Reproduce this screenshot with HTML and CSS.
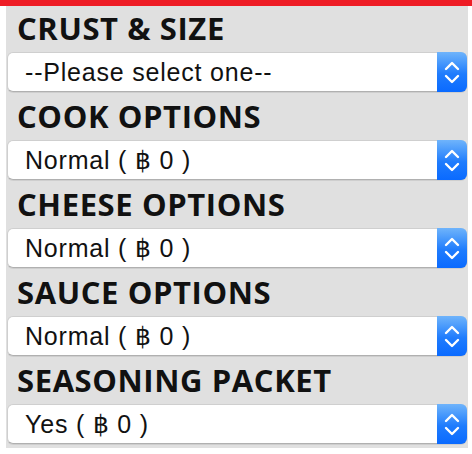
FILE: index.html
```html
<!DOCTYPE html>
<html>
<head>
<meta charset="utf-8">
<link rel="stylesheet" href="styles.css">
</head>
<body>
<div class="topbar"></div>
<div class="panel">
  <div class="group">
    <h2 class="label">CRUST &amp; SIZE</h2>
    <div class="field">
      <select class="picker"><option>--Please select one--</option></select>
      <span class="stepper"><svg viewBox="0 0 30 40" width="30" height="40"><path d="M9 17 L15 11 L21 17 M9 24 L15 30 L21 24" fill="none" stroke="#fff" stroke-width="2.4" stroke-linecap="round" stroke-linejoin="round"/></svg></span>
    </div>
  </div>
  <div class="group">
    <h2 class="label">COOK OPTIONS</h2>
    <div class="field">
      <select class="picker"><option>Normal ( ฿ 0 )</option></select>
      <span class="stepper"><svg viewBox="0 0 30 40" width="30" height="40"><path d="M9 17 L15 11 L21 17 M9 24 L15 30 L21 24" fill="none" stroke="#fff" stroke-width="2.4" stroke-linecap="round" stroke-linejoin="round"/></svg></span>
    </div>
  </div>
  <div class="group">
    <h2 class="label">CHEESE OPTIONS</h2>
    <div class="field">
      <select class="picker"><option>Normal ( ฿ 0 )</option></select>
      <span class="stepper"><svg viewBox="0 0 30 40" width="30" height="40"><path d="M9 17 L15 11 L21 17 M9 24 L15 30 L21 24" fill="none" stroke="#fff" stroke-width="2.4" stroke-linecap="round" stroke-linejoin="round"/></svg></span>
    </div>
  </div>
  <div class="group">
    <h2 class="label">SAUCE OPTIONS</h2>
    <div class="field">
      <select class="picker"><option>Normal ( ฿ 0 )</option></select>
      <span class="stepper"><svg viewBox="0 0 30 40" width="30" height="40"><path d="M9 17 L15 11 L21 17 M9 24 L15 30 L21 24" fill="none" stroke="#fff" stroke-width="2.4" stroke-linecap="round" stroke-linejoin="round"/></svg></span>
    </div>
  </div>
  <div class="group">
    <h2 class="label">SEASONING PACKET</h2>
    <div class="field">
      <select class="picker"><option>Yes ( ฿ 0 )</option></select>
      <span class="stepper"><svg viewBox="0 0 30 40" width="30" height="40"><path d="M9 17 L15 11 L21 17 M9 24 L15 30 L21 24" fill="none" stroke="#fff" stroke-width="2.4" stroke-linecap="round" stroke-linejoin="round"/></svg></span>
    </div>
  </div>
</div>
</body>
</html>
```
FILE: styles.css
```css
html, body {
  margin: 0;
  padding: 0;
  background: #fff;
}
.topbar {
  height: 6px;
  background: #ee1c25;
}
.panel {
  margin: 0 4px 0 6px;
  background: #e0e0e0;
  padding: 0 1px 4px 1px;
  display: flex;
  flex-direction: column;
  gap: 2px;
}
.group {
  display: flex;
  flex-direction: column;
}
.label {
  margin: 0;
  padding: 0 0 2px 10px;
  font-family: "Open Sans", sans-serif;
  font-weight: 700;
  font-size: 31px;
  line-height: 44px;
  color: #111;
  letter-spacing: 0.6px;
  white-space: nowrap;
}
.field {
  position: relative;
  height: 40px;
}
.picker {
  -webkit-appearance: none;
  appearance: none;
  width: 100%;
  height: 40px;
  margin: 0;
  box-sizing: border-box;
  border: 1px solid #cfcfcf;
  border-bottom-color: #b0b0b0;
  border-radius: 6px;
  background: #fff;
  box-shadow: 0 1px 0 rgba(0,0,0,0.08);
  padding: 0 40px 0 17px;
  font-family: "Liberation Sans", Arial, sans-serif;
  font-size: 25px;
  letter-spacing: 0.8px;
  color: #111;
  outline: none;
}
.stepper {
  position: absolute;
  top: 0;
  right: 0;
  width: 30px;
  height: 40px;
  border-radius: 0 6px 6px 0;
  background: linear-gradient(#6fb4fb, #1f7cfd 55%, #0a6aff);
  display: flex;
  pointer-events: none;
}
.stepper svg {
  display: block;
}
```
